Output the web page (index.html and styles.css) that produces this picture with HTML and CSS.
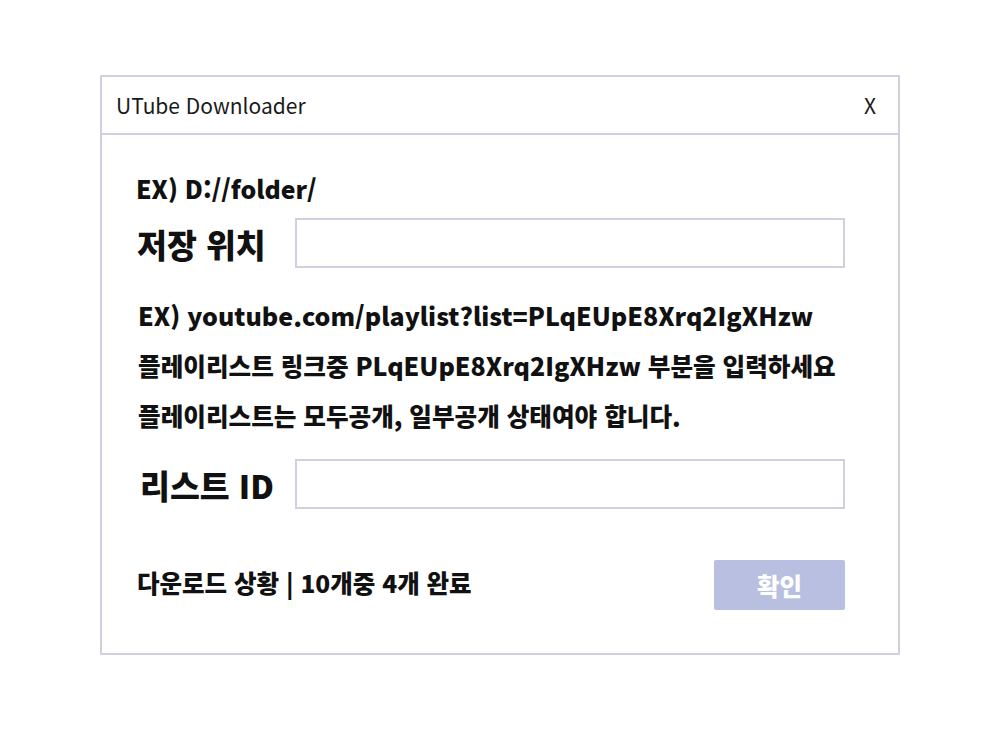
FILE: index.html
```html
<!DOCTYPE html>
<html lang="ko">
<head>
<meta charset="utf-8">
<title>UTube Downloader</title>
<link rel="stylesheet" href="styles.css">
</head>
<body>
<div class="window">
  <div class="titlebar">
    <span class="title">UTube Downloader</span>
    <span class="close">X</span>
  </div>
  <div class="content">
    <div class="hint hint-first">EX) D://folder/</div>
    <div class="field">
      <label class="label">저장 위치</label>
      <input class="input" type="text">
    </div>
    <div class="notes">
      <div class="note latin">EX) youtube.com/playlist?list=PLqEUpE8Xrq2IgXHzw</div>
      <div class="note">플레이리스트 링크중 <span class="latin">PLqEUpE8Xrq2IgXHzw</span> 부분을 입력하세요</div>
      <div class="note">플레이리스트는 모두공개, 일부공개 상태여야 합니다.</div>
    </div>
    <div class="field field-id">
      <label class="label">리스트 ID</label>
      <input class="input" type="text">
    </div>
    <div class="footer">
      <span class="status">다운로드 상황 | 10개중 4개 완료</span>
      <button class="ok">확인</button>
    </div>
  </div>
</div>
</body>
</html>
```
FILE: styles.css
```css
* { box-sizing: border-box; }
body {
  margin: 0;
  background: #ffffff;
  font-family: "Noto Sans CJK KR", "Noto Sans", sans-serif;
  color: #111111;
}
.window {
  margin: 75px 0 0 100px;
  width: 800px;
  height: 580px;
  border: 2px solid #cfd0e0;
  display: flex;
  flex-direction: column;
}
.titlebar {
  height: 58px;
  border-bottom: 2px solid #cfd0e0;
  display: flex;
  align-items: center;
  justify-content: space-between;
  padding: 0 22px 0 14px;
}
.title {
  font-size: 21px;
  font-weight: 400;
  color: #1a1a1a;
}
.close {
  font-size: 21px;
  font-weight: 400;
  color: #1a1a1a;
}
.content {
  padding: 37px 53px 0 34px;
  display: flex;
  flex-direction: column;
}
.hint {
  font-size: 24.8px;
  font-weight: 900;
  line-height: 32px;
  height: 32px;
}
.field {
  margin-top: 14px;
  display: flex;
  align-items: center;
}
.field-id { margin-top: 17px; }
.label {
  width: 159px;
  padding-left: 1px;
  font-size: 32.5px;
  font-weight: 900;
  white-space: nowrap;
}
.field-id .label { padding-left: 4px; }
.input {
  width: 550px;
  height: 50px;
  border: 2px solid #cfd0e0;
  background: #ffffff;
  outline: none;
  margin: 0;
}
.notes {
  margin-top: 22px;
  padding-left: 2px;
}
.note {
  font-size: 24.6px;
  font-weight: 900;
  line-height: 50px;
  height: 50px;
  white-space: nowrap;
}
.note.latin, .note .latin { font-size: 25px; }
.notes .note:last-child { margin-bottom: 2px; }
.footer {
  margin-top: 51px;
  display: flex;
  align-items: center;
  justify-content: space-between;
}
.status {
  font-size: 24.5px;
  font-weight: 900;
  line-height: 30px;
  padding-left: 1px;
  margin-top: -4px;
}
.ok {
  width: 131px;
  height: 50px;
  background: #b8bfe0;
  border: none;
  border-radius: 2px;
  color: #ffffff;
  font-family: "Noto Sans CJK KR", "Noto Sans", sans-serif;
  font-size: 24.5px;
  font-weight: 900;
}
```
